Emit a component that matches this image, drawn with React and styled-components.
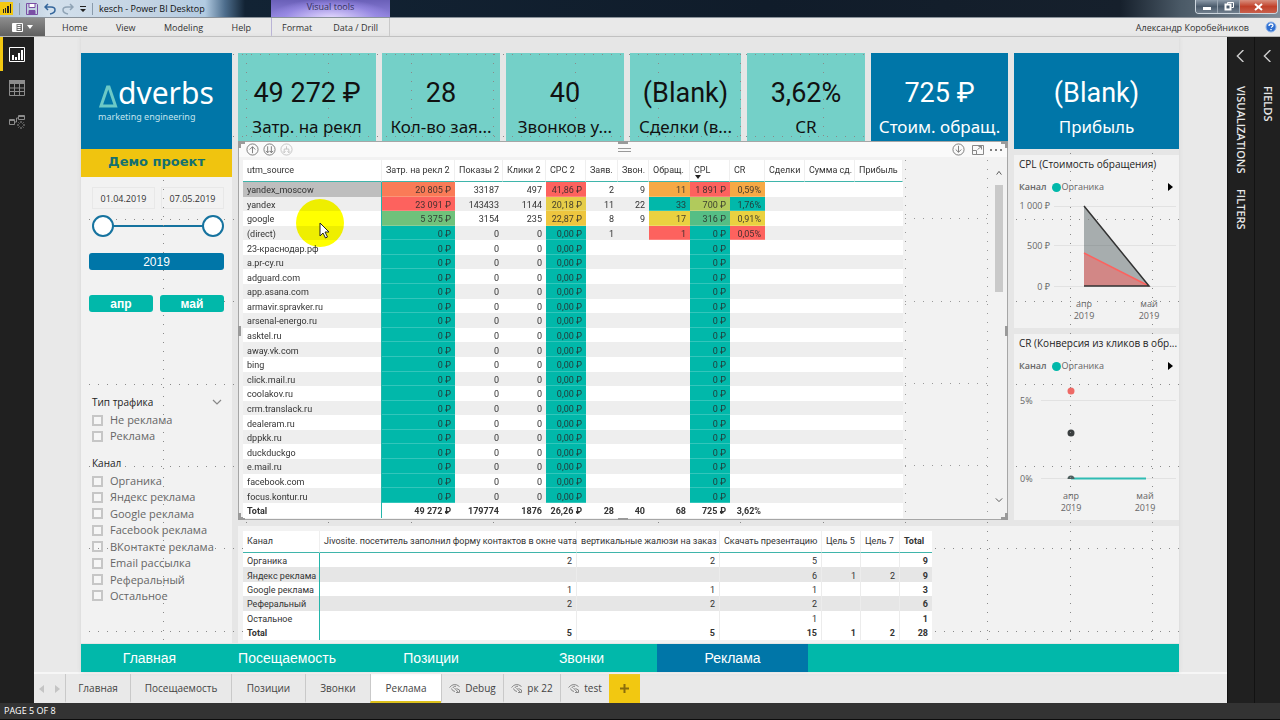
import React from "react";
import styled, { createGlobalStyle, css } from "styled-components";

const teal = "#01b8aa";
const blue = "#0076a8";
const ui = `"Open Sans", "Noto Sans", sans-serif`;

const GlobalStyle = createGlobalStyle`
  * { box-sizing: border-box; }
  body { margin: 0; font-family: ${ui}; background: #202020; color: #333; }
  button, input { font: inherit; color: inherit; }
  button { border: 0; padding: 0; background: none; cursor: pointer; }
  svg { display: block; }
`;

const App_ = styled.div`
  min-height: 100vh;
  display: flex;
  flex-direction: column;
`;

/* ---------- window chrome ---------- */
const TitleBar = styled.header`
  display: flex;
  align-items: stretch;
  height: 18px;
  border-bottom: 1px solid #8a929a;
  background: linear-gradient(90deg, #a9bdd0 0, #d3e0ec 50px, #c3d3e3 150px, #b2cbe2 205px, #4d6d8c 225px, #122334 245px, #101c2a 60%, #16202c 1120px, #4a5966 1180px, #7f8d99 100%);
`;
const QuickAccess = styled.div`
  display: flex;
  align-items: center;
  width: 271px;
  gap: 6px;
  font-size: 9px;
  color: #111;
  white-space: nowrap;
`;
const Divider = styled.span`
  width: 1px;
  height: 12px;
  background: #8a9bab;
`;
const BiLogo = styled.span`
  display: flex;
  align-items: center;
  justify-content: center;
  width: 13px;
  height: 13px;
  background: #f2c811;
`;
const ToolsTab = styled.div`
  width: 119px;
  background: radial-gradient(ellipse at 50% 110%, #e6dcff 0, rgba(160, 145, 235, 0.6) 55%, transparent 75%), linear-gradient(180deg, #6a60b8 0, #8f82dc 100%);
  color: #33305c;
  font-size: 9px;
  line-height: 14px;
  text-align: center;
`;
const WindowButtons = styled.div`
  display: flex;
  margin-left: auto;
  margin-right: 2px;
  height: 14px;
  border: 1px solid #cdd6de;
  border-top: 0;
  border-radius: 0 0 4px 4px;
  overflow: hidden;
`;
const WindowButton = styled.button`
  display: flex;
  align-items: center;
  justify-content: center;
  width: ${(p) => (p.$close ? 37 : 22)}px;
  background: ${(p) =>
    p.$close
      ? "linear-gradient(180deg, #d8907f 0, #c1412a 50%, #c9604c 100%)"
      : "linear-gradient(180deg, #8c9aa8 0, #4b5b6c 50%, #72808e 100%)"};
  border-right: ${(p) => (p.$close ? 0 : "1px solid #9aa6b2")};
`;

const Ribbon = styled.nav`
  display: flex;
  align-items: stretch;
  height: 19px;
  background: #e9e9e9;
  border-bottom: 1px solid #b5b5b5;
  font-size: 9px;
  color: #333;
`;
const FileButton = styled.button`
  display: flex;
  align-items: center;
  justify-content: center;
  gap: 4px;
  width: 45px;
  background: linear-gradient(180deg, #8c8c8c, #5f5f5f);
`;
const RibbonGroup = styled.div`
  display: flex;
  align-items: center;
  ${(p) =>
    p.$tools
      ? css`
          width: 119px;
          justify-content: space-between;
          padding: 0 11px 0 10px;
          border-left: 1px solid #b9b3d6;
          border-right: 1px solid #c9c9c9;
        `
      : css`
          width: 226px;
          justify-content: space-between;
          padding: 0 20px 0 17px;
        `}
`;
const Account = styled.div`
  display: flex;
  align-items: center;
  gap: 16px;
  margin-left: auto;
  padding-right: 3px;
  white-space: nowrap;
`;

const Body = styled.div`
  flex: 1;
  display: flex;
`;
const Rail = styled.aside`
  width: 34px;
  background: #202020;
`;
const RailButton = styled.button`
  display: flex;
  align-items: center;
  justify-content: center;
  width: 34px;
  height: 34px;
  border-left: 3px solid ${(p) => (p.$active ? "#f2c811" : "transparent")};
  padding-right: 3px;
`;
const SidePane = styled.aside`
  display: flex;
  flex-direction: column;
  align-items: center;
  width: ${(p) => p.$width}px;
  padding-top: 13px;
  background: #202020;
  border-left: 1px solid #121212;
  color: #e8e8e8;
`;
const PaneTitle = styled.h2`
  margin: ${(p) => (p.$second ? 15 : 24)}px 0 0;
  writing-mode: vertical-rl;
  font: 600 11px/14px ${ui};
`;
const Workspace = styled.main`
  flex: 1;
  min-width: 0;
  display: flex;
  flex-direction: column;
  background: #e9e9e9;
`;
const StatusBar = styled.footer`
  height: 18px;
  padding-left: 4px;
  background: #333;
  border-bottom: 2px solid #0c0c0c;
  color: #fff;
  font-size: 9px;
  line-height: 16px;
`;

/* ---------- report canvas ---------- */
const Page = styled.div`
  position: relative;
  margin: 0 48px 0 47px;
  padding-top: 16px;
  background: #e6e6e6;
  box-shadow: 0 0 4px #d4d4d4;
`;
const Grid = styled.div`
  display: grid;
  grid-template-columns: minmax(0, 151fr) minmax(0, 770fr) minmax(0, 165fr);
  grid-template-rows: 467px 117px;
  gap: 6px;
  padding-bottom: 1px;
`;
const DotGrid = styled.svg`
  position: absolute;
  left: 0;
  top: 17px;
  width: 100%;
  height: 590px;
  z-index: 1;
  pointer-events: none;
`;
const LeftColumn = styled.div`
  grid-row: 1 / 3;
  display: flex;
  flex-direction: column;
  background: #f2f2f2;
`;
const LogoBox = styled.div`
  position: relative;
  z-index: 2;
  height: 96px;
  padding: 22px 0 0 17px;
  background: ${blue};
  color: #fff;
`;
const LogoLine = styled.div`
  display: flex;
  align-items: flex-end;
  font: 400 30px/36px "Noto Sans", sans-serif;
  svg { margin-bottom: 3px; }
`;
const LogoSub = styled.div`
  font: 400 9px/12px "Noto Sans", sans-serif;
  color: #c4e4ee;
`;
const ProjectTitle = styled.h1`
  position: relative;
  z-index: 2;
  margin: 0;
  height: 28px;
  background: #f0c40f;
  color: #14706f;
  font: 700 13px/25px "DejaVu Sans", sans-serif;
  text-align: center;
`;
const DateSlicer = styled.div`
  padding: 10px 8px 0 11px;
  height: 76px;
`;
const DateRow = styled.div`
  display: flex;
  gap: 6px;
`;
const DateInput = styled.input`
  flex: 1;
  min-width: 0;
  height: 22px;
  padding: 0;
  border: 1px solid #e8e8e8;
  background: transparent;
  font-size: 9px;
  text-align: center;
  outline: 0;
`;
const RangeTrack = styled.div`
  position: relative;
  height: 22px;
  margin-top: 6px;
  &::before {
    content: "";
    position: absolute;
    left: 11px;
    right: 11px;
    top: 10px;
    height: 2px;
    background: #16739f;
  }
`;
const Range = styled.input`
  appearance: none;
  position: absolute;
  inset: 0;
  width: 100%;
  height: 22px;
  margin: 0;
  background: transparent;
  pointer-events: none;
  z-index: 2;
  &::-webkit-slider-thumb {
    appearance: none;
    width: 22px;
    height: 22px;
    border: 2px solid #16739f;
    border-radius: 50%;
    background: #fff;
    pointer-events: auto;
  }
`;
const ChipRow = styled.div`
  display: flex;
  gap: 7px;
  padding: 0 8px;
  margin-bottom: ${(p) => (p.$last ? 82 : 25)}px;
`;
const Chip = styled.button`
  position: relative;
  z-index: 2;
  flex: 1;
  height: 17px;
  border-radius: 3px;
  background: ${(p) => (p.$primary ? blue : teal)};
  color: #fff;
  font: ${(p) => (p.$primary ? 400 : 700)} 12px/16px "Liberation Sans", sans-serif;
`;
const FilterGroup = styled.fieldset`
  margin: 0 0 ${(p) => p.$after}px;
  padding: 0 10px 0 11px;
  border: 0;
  min-width: 0;
`;
const FilterTitle = styled.legend`
  display: flex;
  justify-content: space-between;
  align-items: center;
  width: 100%;
  padding: 0;
  font-size: 10px;
  line-height: 16px;
  color: #222;
`;
const FilterList = styled.div`
  display: flex;
  flex-direction: column;
  justify-content: space-between;
  height: ${(p) => p.$height}px;
  margin-top: 2px;
`;
const Check = styled.label`
  display: flex;
  align-items: center;
  gap: 7px;
  font-size: 11px;
  line-height: 16px;
  color: #666;
  white-space: nowrap;
  input {
    appearance: none;
    width: 11px;
    height: 11px;
    margin: 0;
    border: 2px solid #c6c6c6;
    background: #f6f6f6;
  }
`;

const Center = styled.div`
  display: flex;
  flex-direction: column;
  min-width: 0;
`;
const Cards = styled.div`
  display: grid;
  grid-template-columns: minmax(0, 138fr) minmax(0, 118fr) minmax(0, 118fr) minmax(0, 111fr) minmax(0, 118fr) minmax(0, 137fr);
  gap: 6px;
`;
const Card = styled.section`
  position: relative;
  z-index: ${(p) => (p.$dark ? 2 : 0)};
  height: ${(p) => (p.$tall ? 96 : 88)}px;
  padding-top: 24px;
  background: ${(p) => (p.$dark ? blue : "#74d0c8")};
  color: ${(p) => (p.$dark ? "#fff" : "#111")};
  text-align: center;
  white-space: nowrap;
  overflow: hidden;
`;
const CardValue = styled.div`
  font: 400 27px/32px Roboto, sans-serif;
`;
const CardLabel = styled.div`
  font: 400 17px/24px "Noto Sans", sans-serif;
  margin-top: 6px;
`;

const MatrixVisual = styled.section`
  position: relative;
  z-index: 2;
  flex: 1;
  border: 1px solid #a6a6a6;
  padding: 0 4px;
  background: #f2f2f2;
`;
const VisualHeader = styled.div`
  display: flex;
  align-items: center;
  gap: 4px;
  height: 15px;
  margin: 0 -4px 3px;
  padding: 0 4px 0 7px;
  background: #fafafa;
`;
const VisualTools = styled.div`
  display: flex;
  align-items: center;
  flex: 1;
  gap: 4px;
  justify-content: ${(p) => (p.$end ? "flex-end" : "flex-start")};
`;
const Grip = styled.span`
  width: 13px;
  height: 4px;
  border-top: 1px solid #999;
  border-bottom: 1px solid #999;
`;
const Handle = styled.span`
  position: absolute;
  width: ${(p) => (p.$v ? 3 : 10)}px;
  height: ${(p) => (p.$v ? 10 : 3)}px;
  background: #9a9a9a;
  ${(p) => p.$at}
`;
const Corner = styled.span`
  position: absolute;
  width: 7px;
  height: 7px;
  border: 0 solid #9a9a9a;
  ${(p) => p.$at}
`;
const MatrixRow = styled.div`
  display: flex;
  justify-content: space-between;
`;
const VisualDots = styled.svg`
  flex: 1;
  height: 358px;
`;
const DataTable = styled.table`
  position: relative;
  z-index: 2;
  border-collapse: separate;
  border-spacing: 0;
  table-layout: fixed;
  width: ${(p) => p.$width}px;
  height: ${(p) => p.$height}px;
  background: #fff;
  font-family: Roboto, "Open Sans", sans-serif;
  font-size: 9px;
  line-height: 12px;
  color: #333;
  white-space: nowrap;
  th, td { padding: 2px 4px 0; }
  td { text-align: right; }
  thead th {
    height: 22px;
    padding: 0 4px 2px;
    font-weight: 400;
    text-align: left;
    border-bottom: 1px solid #3fb5ab;
    border-right: 1px solid #efefef;
    position: relative;
  }
  tbody th, tfoot th {
    text-align: left;
    font-weight: 400;
    border-right: 1px solid #24b5aa;
  }
  tfoot th, tfoot td { height: 15px; padding-top: 0; font-weight: 700; }
  tbody tr:nth-child(even) { background: ${(p) => p.$stripe}; }
  ${(p) =>
    p.$lines &&
    css`
      td { border-right: 1px solid #ececec; }
      th:last-child, td:last-child { font-weight: 700; border-right: 0; }
      tbody th:first-child, tfoot th:first-child { border-right: 1px solid #24b5aa; }
    `}
`;
const HeatCell = styled.td`
  background: ${(p) => p.$bg || "transparent"};
  ${(p) => p.$bg && "box-shadow: inset 0 -1px rgba(255, 255, 255, 0.2); color: rgba(40, 40, 40, 0.85);"}
`;
const SourceCell = styled.th`
  background: ${(p) => (p.$selected ? "#bebebe" : "transparent")};
`;
const SortMark = styled.span`
  position: absolute;
  left: 5px;
  bottom: 2px;
  border: 3px solid transparent;
  border-top: 4px solid #222;
  border-bottom: 0;
`;
const Scroll = styled.div`
  display: flex;
  flex-direction: column;
  align-items: center;
  width: 8px;
  margin: 9px 0 14px;
`;
const Thumb = styled.div`
  width: 8px;
  height: 107px;
  margin: 8px 0 auto;
  background: #c9c9c9;
`;
const Pointer = styled.svg`
  position: absolute;
  left: 57px;
  top: 57px;
  z-index: 3;
  mix-blend-mode: ${(p) => (p.$halo ? "multiply" : "normal")};
  pointer-events: none;
`;

const RightColumn = styled.div`
  display: flex;
  flex-direction: column;
  gap: 6px;
  min-width: 0;
`;
const ChartPanel = styled.section`
  flex: ${(p) => p.$grow} 0 0;
  padding-top: 1px;
  background: #f2f2f2;
  overflow: hidden;
`;
const ChartTitle = styled.h3`
  margin: 0;
  padding-left: 5px;
  font: 400 10px/16px ${ui};
  color: #222;
  white-space: nowrap;
`;
const Legend = styled.div`
  display: flex;
  align-items: center;
  gap: 1px;
  margin-top: 8px;
  padding: 0 6px 0 5px;
  font-size: 9px;
  line-height: 14px;
  color: #666;
  b { font-weight: 600; margin-right: 4px; }
  i { width: 9px; height: 9px; border-radius: 50%; background: ${teal}; }
  button {
    margin-left: auto;
    border: 4px solid transparent;
    border-left: 5px solid #000;
    border-right: 0;
  }
`;
const ChartSvg = styled.svg`
  width: 100%;
  font-family: ${ui};
  font-size: 9px;
  fill: #666;
`;
const BottomPanel = styled.section`
  grid-column: 2 / 4;
  padding: 5px;
  background: #f2f2f2;
`;

const ReportNav = styled.nav`
  position: relative;
  z-index: 2;
  display: grid;
  grid-template-columns: 137fr 138fr 150fr 151fr 151fr 371fr;
  height: 28px;
  background: ${teal};
`;
const NavLink = styled.a`
  background: ${(p) => (p.$active ? blue : "transparent")};
  color: #fff;
  font: 400 14px/28px "Liberation Sans", sans-serif;
  text-align: center;
  text-decoration: none;
`;

const PageTabs = styled.div`
  display: flex;
  height: 31px;
  margin-top: auto;
  border-top: 2px solid #f6f6f6;
  background: #e9e9e9;
`;
const TabArrows = styled.div`
  display: flex;
  align-items: center;
  justify-content: space-around;
  width: 31px;
  svg { fill: #c4c4c4; }
`;
const Tab = styled.button`
  display: flex;
  align-items: center;
  justify-content: center;
  gap: 4px;
  width: ${(p) => p.$width}px;
  border-left: 1px solid #c9c9c9;
  border-bottom: 2px solid ${(p) => (p.$active ? "#dcc01c" : "transparent")};
  background: ${(p) => (p.$active ? "#fff" : "transparent")};
  font-size: ${(p) => (p.$width > 100 ? 9 : 10)}px;
  font-size: 10px;
  color: #444;
`;
const AddTab = styled(Tab)`
  background: #f2c811;
  border: 0;
`;

const red = "#fd625e";
const rows = [
  ["yandex_moscow", ["20 805 ₽", "#fa7b57"], "33187", "497", ["41,86 ₽", red], "2", "9", ["11", "#f6a945"], ["1 891 ₽", red], ["0,59%", "#f6a945"]],
  ["yandex", ["23 091 ₽", red], "143433", "1144", ["20,18 ₽", "#e6cd48"], "11", "22", ["33", teal], ["700 ₽", "#b1ca5c"], ["1,76%", teal]],
  ["google", ["5 375 ₽", "#6fc27b"], "3154", "235", ["22,87 ₽", "#eec63f"], "8", "9", ["17", "#ead140"], ["316 ₽", "#55be85"], ["0,91%", "#ead140"]],
  ["(direct)", ["0 ₽", teal], "0", "0", ["0,00 ₽", teal], "1", "", ["1", red], ["0 ₽", teal], ["0,05%", red]],
  ...["23-краснодар.рф", "a.pr-cy.ru", "adguard.com", "app.asana.com", "armavir.spravker.ru", "arsenal-energo.ru", "asktel.ru", "away.vk.com", "bing", "click.mail.ru", "coolakov.ru", "crm.translack.ru", "dealeram.ru", "dppkk.ru", "duckduckgo", "e.mail.ru", "facebook.com", "focus.kontur.ru"].map((s) => [
    s, ["0 ₽", teal], "0", "0", ["0,00 ₽", teal], "", "", "", ["0 ₽", teal], "",
  ]),
];
const columns = [["utm_source", 139], ["Затр. на рекл 2", 73], ["Показы 2", 48], ["Клики 2", 43], ["CPC 2", 40], ["Заяв.", 32], ["Звон.", 31], ["Обращ.", 41], ["CPL", 40], ["CR", 35], ["Сделки", 40], ["Сумма сд.", 50], ["Прибыль", 48]];
const totals = ["49 272 ₽", "179774", "1876", "26,26 ₽", "28", "40", "68", "725 ₽", "3,62%", "", "", ""];

const goalColumns = [["Канал", 77], ["Jivosite. посетитель заполнил форму контактов в окне чата", 257], ["вертикальные жалюзи на заказ", 143], ["Скачать презентацию", 102], ["Цель 5", 39], ["Цель 7", 39], ["Total", 32]];
const goals = [
  ["Органика", "2", "2", "5", "", "", "9"],
  ["Яндекс реклама", "", "", "6", "1", "2", "9"],
  ["Google реклама", "1", "1", "1", "", "", "3"],
  ["Реферальный", "2", "2", "2", "", "", "6"],
  ["Остальное", "", "", "1", "", "", "1"],
];

const cards = [["49 272 ₽", "Затр. на рекл"], ["28", "Кол-во зая..."], ["40", "Звонков у..."], ["(Blank)", "Сделки (в..."], ["3,62%", "CR"], ["725 ₽", "Стоим. обращ.", true]];
const channels = ["Органика", "Яндекс реклама", "Google реклама", "Facebook реклама", "ВКонтакте реклама", "Email рассылка", "Реферальный", "Остальное"];
const navItems = ["Главная", "Посещаемость", "Позиции", "Звонки", "Реклама"];
const tabs = [["Главная", 65], ["Посещаемость", 101], ["Позиции", 74], ["Звонки", 65], ["Реклама", 71], ["Debug", 62, true], ["рк 22", 57, true], ["test", 49, true]];

const range = (n) => Array.from({ length: n }, (_, i) => i);

function CanvasDots() {
  return (
    <DotGrid aria-hidden="true" stroke="#8a8a8a" strokeWidth="1" strokeDasharray="1 8">
      {range(13).map((i) => {
        const x = Math.round((i + 1) * 82.4) + 0.5;
        return <line key={i} x1={x} x2={x} y1="0" y2="590" />;
      })}
      {range(8).map((i) => {
        const y = Math.round(i * 82.4) + 0.5;
        return <line key={i} x1="8" x2="100%" y1={y} y2={y} />;
      })}
    </DotGrid>
  );
}

function DrillIcon({ kind, faded }) {
  const d = {
    up: "M7 11V4M4 7l3-3 3 3",
    down: "M7 3v7M4 7l3 3 3-3",
    double: "M5 3.5v7M3 8.5l2 2 2-2M9 3.5v7M7.500 8.500l1.500 2 2-2",
    fork: "M7 3.500v3M4.500 10.500V6.500h5v4M3 9l1.500 1.500L6 9M8 9l1.500 1.500L11 9",
  }[kind];
  return (
    <svg width="13" height="13" viewBox="0 0 14 14" fill="none" stroke={faded ? "#c4c4c4" : "#777"} strokeWidth="1">
      <circle cx="7" cy="7" r="6" />
      <path d={d} />
    </svg>
  );
}

function Chevron({ dir, color = "#555", size = 10 }) {
  const d = { up: "M2 7l3-4 3 4", down: "M1 3l4 4 4-4", left: "M7 0L2 5l5 5" }[dir];
  return (
    <svg width={size} height={size} viewBox="0 0 10 10" fill="none" stroke={color} strokeWidth="1.2">
      <path d={d} />
    </svg>
  );
}

function HiddenPageIcon() {
  return (
    <svg width="12" height="12" viewBox="0 0 12 12" fill="none" stroke="#888">
      <path d="M.5 5.500Q5 0 10.500 4.500M2.500 6.500Q3 9 6 9.500M4 6a2 2 0 0 1 3-1.500M5.500 6l4 4.500M7.500 6.500l3 1.500v2.500H7" />
    </svg>
  );
}

function ChartHead({ title }) {
  return (
    <>
      <ChartTitle>{title}</ChartTitle>
      <Legend>
        <b>Канал</b>
        <i />
        <span>Органика</span>
        <button aria-label="Далее" />
      </Legend>
    </>
  );
}

export default function App() {
  return (
    <App_>
      <GlobalStyle />
      <TitleBar>
        <QuickAccess>
          <BiLogo>
            <svg width="10" height="9"><path d="M1 5h1v4H1zM3 4h1v5H3zM5 2h2v7H5zM8 0h1v9H8z" fill="#222" /></svg>
          </BiLogo>
          <Divider />
          <svg width="12" height="12" fill="none" stroke="#7b4fa5"><path d="M.5.500h10l1 1v10H.5z" /><path d="M3 .5h6v4H3z" fill="#fff" /><path d="M3 11.500v-4h6v4" fill="#7b4fa5" /></svg>
          <svg width="12" height="12" fill="none" stroke="#34669c" strokeWidth="1.500"><path d="M4 1L1 4l3 3M1 4h6q4 0 4 3t-5 4" /></svg>
          <svg width="12" height="12" fill="none" stroke="#8fa3b5" strokeWidth="1.500"><path d="M8 1l3 3-3 3M11 4H5Q1 4 1 7t5 4" /></svg>
          <svg width="6" height="8" fill="#222"><path d="M0 1h6v1H0zM0 4h6L3 7z" /></svg>
          <Divider />
          <span>kesch - Power BI Desktop</span>
        </QuickAccess>
        <ToolsTab>Visual tools</ToolsTab>
        <WindowButtons>
          <WindowButton aria-label="Свернуть">
            <svg width="10" height="8"><rect x="1" y="4" width="8" height="3" fill="#fff" /></svg>
          </WindowButton>
          <WindowButton aria-label="Восстановить">
            <svg width="10" height="9" fill="none" stroke="#fff"><path d="M3.500 2.500v-2h6v5h-2" /><path d="M1.500 2.500h5v5h-5z" strokeWidth="2" /></svg>
          </WindowButton>
          <WindowButton $close aria-label="Закрыть">
            <svg width="9" height="8" stroke="#fff" strokeWidth="2"><path d="M1 1l7 6M8 1L1 7" /></svg>
          </WindowButton>
        </WindowButtons>
      </TitleBar>

      <Ribbon>
        <FileButton aria-label="Файл">
          <svg width="11" height="9" fill="none" stroke="#fff"><path d="M.5.500h10v8H.5zM5.500 2.500h3M5.500 4.500h3M5.500 6.500h3" /><path d="M1 1h3v7H1z" fill="#fff" /></svg>
          <svg width="6" height="4" fill="#fff"><path d="M0 0h6L3 4z" /></svg>
        </FileButton>
        <RibbonGroup>
          {["Home", "View", "Modeling", "Help"].map((t) => <button key={t}>{t}</button>)}
        </RibbonGroup>
        <RibbonGroup $tools>
          {["Format", "Data / Drill"].map((t) => <button key={t}>{t}</button>)}
        </RibbonGroup>
        <Account>
          <span>Александр Коробейников</span>
          <svg width="12" height="12" fill="none"><circle cx="6" cy="6" r="5" fill="#2e6fd0" stroke="#8fb4ea" /><path d="M4 5q0-2 2-2t2 1.500Q8 5.500 6 6.500M6 8v1.200" stroke="#fff" strokeWidth="1.300" /></svg>
        </Account>
      </Ribbon>

      <Body>
        <Rail>
          <RailButton $active aria-label="Отчет">
            <svg width="16" height="15" fill="none" stroke="#fff"><path d="M.5.500h15v14H.5z" /><path d="M3 8h2v5H3zM6 10h2v3H6zM9 6h2v7H9zM12 3h2v10h-2z" fill="#fff" stroke="none" /></svg>
          </RailButton>
          <RailButton aria-label="Данные">
            <svg width="16" height="16" fill="none" stroke="#8c8c8c"><path d="M.5.500h15v15H.5zM0 8h16M0 11.500h16M5.500 4v12M10.500 4v12" /><path d="M0 0h16v4H0z" fill="#8c8c8c" stroke="none" /></svg>
          </RailButton>
          <RailButton aria-label="Модель">
            <svg width="16" height="16" fill="none" stroke="#8c8c8c"><path d="M.5 5.500h5v5h-5zM9.500 1.500h6v4h-6zM.5 6.500h5M9.500 2.500h6M5.500 8H7.500V4h2M12 7v2M12 13v2M8 11h2M14 11h2M9.500 8.500l1 1M14.500 8.500l-1 1M9.500 13.500l1-1M14.500 13.500l-1-1" /></svg>
          </RailButton>
        </Rail>

        <Workspace>
          <Page>
            <CanvasDots />
            <Grid>
              <LeftColumn>
                <LogoBox>
                  <LogoLine>
                    <svg width="20" height="24" fill="none" stroke="#6cc9c6" strokeWidth="3"><path d="M3 22L9.500 3h1.500l6.500 19z" /></svg>
                    dverbs
                  </LogoLine>
                  <LogoSub>marketing engineering</LogoSub>
                </LogoBox>
                <ProjectTitle>Демо проект</ProjectTitle>
                <DateSlicer>
                  <DateRow>
                    <DateInput aria-label="Начало периода" defaultValue="01.04.2019" />
                    <DateInput aria-label="Конец периода" defaultValue="07.05.2019" />
                  </DateRow>
                  <RangeTrack>
                    <Range type="range" aria-label="С даты" defaultValue="0" />
                    <Range type="range" aria-label="По дату" defaultValue="100" />
                  </RangeTrack>
                </DateSlicer>
                <ChipRow><Chip $primary>2019</Chip></ChipRow>
                <ChipRow $last><Chip>апр</Chip><Chip>май</Chip></ChipRow>
                <FilterGroup $after={11}>
                  <FilterTitle>
                    Тип трафика
                    <button aria-label="Развернуть"><Chevron dir="down" color="#888" /></button>
                  </FilterTitle>
                  <FilterList $height={32}>
                    {["Не реклама", "Реклама"].map((t) => <Check key={t}><input type="checkbox" />{t}</Check>)}
                  </FilterList>
                </FilterGroup>
                <FilterGroup $after={0}>
                  <FilterTitle>Канал</FilterTitle>
                  <FilterList $height={131}>
                    {channels.map((t) => <Check key={t}><input type="checkbox" />{t}</Check>)}
                  </FilterList>
                </FilterGroup>
              </LeftColumn>

              <Center>
                <Cards>
                  {cards.map(([v, l, dark]) => (
                    <Card key={l} $dark={dark}>
                      <CardValue>{v}</CardValue>
                      <CardLabel>{l}</CardLabel>
                    </Card>
                  ))}
                </Cards>
                <MatrixVisual>
                  <VisualHeader>
                    <VisualTools>
                      <DrillIcon kind="up" />
                      <DrillIcon kind="double" />
                      <DrillIcon kind="fork" faded />
                    </VisualTools>
                    <Grip />
                    <VisualTools $end>
                      <DrillIcon kind="down" />
                      <svg width="16" height="12" fill="none" stroke="#888"><path d="M3.500 1.500h11v9h-11zM3.500 6.500h4v4M8.500 5.500l4-3M9.500 2.500h3v3" /></svg>
                      <svg width="14" height="4" fill="#555"><circle cx="2" cy="2" r="1" /><circle cx="7" cy="2" r="1" /><circle cx="12" cy="2" r="1" /></svg>
                    </VisualTools>
                  </VisualHeader>
                  <MatrixRow>
                    <DataTable $width={660} $height={358} $stripe="#eeeeee">
                      <colgroup>{columns.map(([c, w]) => <col key={c} width={w} />)}</colgroup>
                      <thead>
                        <tr>{columns.map(([c]) => <th key={c} scope="col">{c}{c === "CPL" && <SortMark />}</th>)}</tr>
                      </thead>
                      <tbody>
                        {rows.map(([name, ...cells], i) => (
                          <tr key={name}>
                            <SourceCell scope="row" $selected={i === 0}>{name}</SourceCell>
                            {[...cells, "", "", ""].map((c, j) =>
                              Array.isArray(c) ? <HeatCell key={j} $bg={c[1]}>{c[0]}</HeatCell> : <td key={j}>{c}</td>
                            )}
                          </tr>
                        ))}
                      </tbody>
                      <tfoot>
                        <tr><th scope="row">Total</th>{totals.map((t, i) => <td key={i}>{t}</td>)}</tr>
                      </tfoot>
                    </DataTable>
                    <VisualDots aria-hidden="true" stroke="#9a9a9a" strokeDasharray="1 8">
                      <path d="M2.500 0v358M84.500 0v358M2 58.500h90M2 141.500h90M2 223.500h90M2 305.500h90" />
                    </VisualDots>
                    <Scroll>
                      <Chevron dir="up" size={8} />
                      <Thumb />
                      <Chevron dir="down" size={8} />
                    </Scroll>
                  </MatrixRow>
                  <Corner $at="left:-1px; top:-1px; border-width:3px 0 0 3px;" />
                  <Corner $at="right:-1px; top:-1px; border-width:3px 3px 0 0;" />
                  <Corner $at="left:-1px; bottom:-1px; border-width:0 0 3px 3px;" />
                  <Corner $at="right:-1px; bottom:-1px; border-width:0 3px 3px 0;" />
                  <Handle $at="left:calc(50% - 5px); top:-1px;" />
                  <Handle $at="left:calc(50% - 5px); bottom:-1px;" />
                  <Handle $v $at="left:-1px; top:calc(50% - 5px);" />
                  <Handle $v $at="right:-1px; top:calc(50% - 5px);" />
                  <Pointer $halo width="48" height="48"><circle cx="24" cy="24" r="24" fill="#ffff00" /></Pointer>
                  <Pointer width="48" height="48">
                    <path d="M24 24v13l3-3 2.500 5 2-1-2.500-5h4z" fill="#fff" stroke="#222" />
                  </Pointer>
                </MatrixVisual>
              </Center>

              <RightColumn>
                <Card $dark $tall>
                  <CardValue>(Blank)</CardValue>
                  <CardLabel>Прибыль</CardLabel>
                </Card>
                <ChartPanel $grow={173}>
                  <ChartHead title="CPL (Стоимость обращения)" />
                  <ChartSvg viewBox="0 0 165 132">
                    <path d="M40 12.500h122M40 51.500h122M40 92.500h122" stroke="#e2e2e2" />
                    <path d="M70 12l65 80H70z" fill="#374649" opacity=".4" />
                    <path d="M70 59l65 33H70z" fill={red} opacity=".5" />
                    <path d="M70 59l65 33" stroke={red} strokeWidth="1.500" />
                    <path d="M70 12l65 80H70" fill="none" stroke="#333" strokeWidth="1.500" />
                    <text x="36" y="15" textAnchor="end">1 000 ₽</text>
                    <text x="36" y="55" textAnchor="end">500 ₽</text>
                    <text x="36" y="96" textAnchor="end">0 ₽</text>
                    <g textAnchor="middle">
                      <text x="70" y="113">апр</text><text x="70" y="125">2019</text>
                      <text x="135" y="113">май</text><text x="135" y="125">2019</text>
                    </g>
                  </ChartSvg>
                </ChartPanel>
                <ChartPanel $grow={186}>
                  <ChartHead title="CR (Конверсия из кликов в обр..." />
                  <ChartSvg viewBox="0 0 165 147">
                    <path d="M27 27.500h135M27 105.500h135" stroke="#e2e2e2" />
                    <circle cx="57" cy="18" r="3.500" fill="#ee6a66" />
                    <circle cx="57" cy="60" r="3.500" fill="#3b3f40" />
                    <path d="M57 105.500h75" stroke="#2fbcb3" strokeWidth="2" />
                    <path d="M53.500 106a3.500 3.500 0 0 1 7 0z" fill="#4f605f" />
                    <text x="6" y="31">5%</text>
                    <text x="6" y="109">0%</text>
                    <g textAnchor="middle">
                      <text x="57" y="126">апр</text><text x="57" y="138">2019</text>
                      <text x="131" y="126">май</text><text x="131" y="138">2019</text>
                    </g>
                  </ChartSvg>
                </ChartPanel>
              </RightColumn>

              <BottomPanel>
                <DataTable $width={689} $height={109} $stripe="#e6e6e6" $lines>
                  <colgroup>{goalColumns.map(([c, w]) => <col key={c} width={w} />)}</colgroup>
                  <thead><tr>{goalColumns.map(([c]) => <th key={c} scope="col">{c}</th>)}</tr></thead>
                  <tbody>
                    {goals.map(([name, ...cells]) => (
                      <tr key={name}><th scope="row">{name}</th>{cells.map((c, i) => <td key={i}>{c}</td>)}</tr>
                    ))}
                  </tbody>
                  <tfoot>
                    <tr><th scope="row">Total</th>{["5", "5", "15", "1", "2", "28"].map((c, i) => <td key={i}>{c}</td>)}</tr>
                  </tfoot>
                </DataTable>
              </BottomPanel>
            </Grid>
            <ReportNav>
              {navItems.map((t) => <NavLink key={t} href="#" $active={t === "Реклама"}>{t}</NavLink>)}
            </ReportNav>
          </Page>
          <PageTabs>
            <TabArrows>
              <svg width="5" height="8"><path d="M5 0v8L0 4z" /></svg>
              <svg width="5" height="8"><path d="M0 0v8l5-4z" /></svg>
            </TabArrows>
            {tabs.map(([t, w, hidden]) => (
              <Tab key={t} $width={w} $active={t === "Реклама"}>{hidden && <HiddenPageIcon />}{t}</Tab>
            ))}
            <AddTab $width={31} aria-label="Новая страница">
              <svg width="9" height="9" stroke="#8a6d0c" strokeWidth="2"><path d="M4.500 0v9M0 4.500h9" /></svg>
            </AddTab>
          </PageTabs>
        </Workspace>

        <SidePane $width={27}>
          <Chevron dir="left" color="#ccc" size={12} />
          <PaneTitle>VISUALIZATIONS</PaneTitle>
          <PaneTitle $second>FILTERS</PaneTitle>
        </SidePane>
        <SidePane $width={26}>
          <Chevron dir="left" color="#ccc" size={12} />
          <PaneTitle>FIELDS</PaneTitle>
        </SidePane>
      </Body>
      <StatusBar>PAGE 5 OF 8</StatusBar>
    </App_>
  );
}
